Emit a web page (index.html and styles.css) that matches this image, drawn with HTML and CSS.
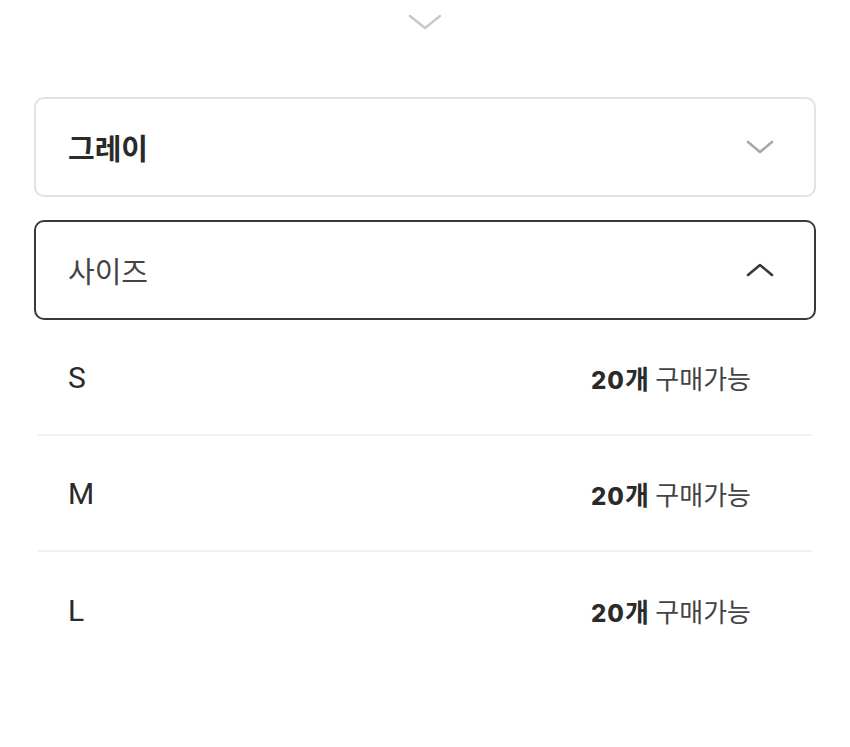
FILE: index.html
```html
<!DOCTYPE html>
<html lang="ko">
<head>
    <meta charset="UTF-8">
    <meta name="viewport" content="width=device-width, initial-scale=1.0">
    <title>옵션 선택</title>
    <link rel="stylesheet" href="styles.css">
</head>
<body>
    <div class="sheet">
        <div class="handle">
            <svg width="34" height="18" viewBox="0 0 34 18"><path d="M2 3 L17 15 L32 3" fill="none" stroke="#c8c8c8" stroke-width="2.4" stroke-linecap="round" stroke-linejoin="round"/></svg>
        </div>

        <div class="select">
            <span class="select-value">그레이</span>
            <svg width="28" height="16" viewBox="0 0 28 16"><path d="M2 3 L14 13 L26 3" fill="none" stroke="#a8a8a8" stroke-width="2.6" stroke-linecap="round" stroke-linejoin="round"/></svg>
        </div>

        <div class="select open">
            <span class="select-placeholder">사이즈</span>
            <svg width="28" height="16" viewBox="0 0 28 16"><path d="M2 13 L14 3 L26 13" fill="none" stroke="#3a3a3a" stroke-width="2.6" stroke-linecap="round" stroke-linejoin="round"/></svg>
        </div>

        <ul class="options">
            <li class="option">
                <span class="option-name">S</span>
                <span class="option-stock"><b><span class="num">20</span>개</b> 구매가능</span>
            </li>
            <li class="option">
                <span class="option-name">M</span>
                <span class="option-stock"><b><span class="num">20</span>개</b> 구매가능</span>
            </li>
            <li class="option">
                <span class="option-name">L</span>
                <span class="option-stock"><b><span class="num">20</span>개</b> 구매가능</span>
            </li>
        </ul>
    </div>
</body>
</html>
```

FILE: styles.css
```css
* {
    margin: 0;
    padding: 0;
    box-sizing: border-box;
}

body {
    font-family: Roboto, "Noto Sans CJK KR", sans-serif;
    background: #fff;
    color: #222;
}

.sheet {
    padding: 0 34px;
}

.handle {
    height: 97px;
    display: flex;
    justify-content: center;
    padding-top: 13px;
}

.select {
    height: 100px;
    border: 2px solid #e2e2e2;
    border-radius: 10px;
    display: flex;
    align-items: center;
    justify-content: space-between;
    padding: 0 40px 0 32px;
    margin-bottom: 23px;
}

.select.open {
    border-color: #3a3a3a;
    margin-bottom: 0;
}

.select-value {
    font-size: 29px;
    font-weight: 700;
    color: #2a2a2a;
}

.select-placeholder {
    font-size: 29px;
    color: #444;
}

.options {
    list-style: none;
    margin: 0 4px;
}

.option {
    height: 116px;
    display: flex;
    align-items: center;
    justify-content: space-between;
    padding: 0 61px 0 30px;
    border-bottom: 2px solid #f0f0f0;
}

.option:last-child {
    border-bottom: none;
}

.option-name {
    font-size: 30px;
    color: #2a2a2a;
}

.option-stock {
    font-size: 26px;
    color: #444;
}

.option-stock b {
    color: #2a2a2a;
}

.option-stock .num {
    font-family: Inter, sans-serif;
    font-weight: 800;
    font-size: 24px;
    letter-spacing: 1px;
}
```
